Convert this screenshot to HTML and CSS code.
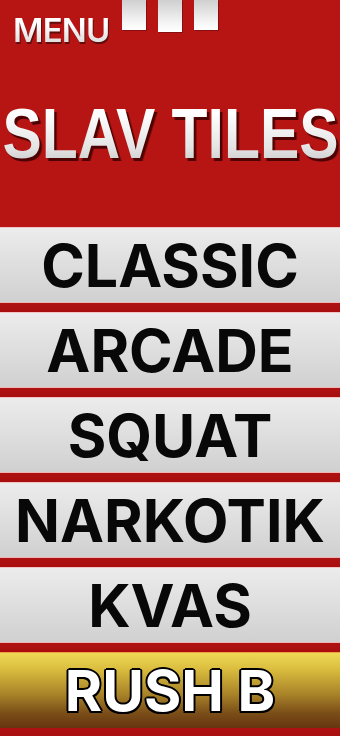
FILE: index.html
```html
<!DOCTYPE html>
<html>
<head>
<meta charset="utf-8">
<link rel="stylesheet" href="styles.css">
</head>
<body>
<div class="screen">
  <header class="header">
    <div class="menu-row">
      <span class="menu-label">MENU</span>
      <div class="bars">
        <span class="bar"></span>
        <span class="bar bar-long"></span>
        <span class="bar"></span>
      </div>
    </div>
    <div class="title-wrap">
      <h1 class="title">SLAV TILES</h1>
    </div>
  </header>
  <nav class="modes">
    <div class="mode">CLASSIC</div>
    <div class="mode">ARCADE</div>
    <div class="mode">SQUAT</div>
    <div class="mode">NARKOTIK</div>
    <div class="mode">KVAS</div>
    <div class="mode mode-gold">RUSH B</div>
  </nav>
</div>
</body>
</html>
```

FILE: styles.css
```css
html, body {
  margin: 0;
  padding: 0;
  background: #b81313;
}
.screen {
  width: 340px;
  height: 736px;
  overflow: hidden;
  background: #b81313;
  display: flex;
  flex-direction: column;
}
.header {
  height: 227px;
  display: flex;
  flex-direction: column;
  background: #b71414;
}
.menu-row {
  display: flex;
  align-items: flex-start;
  height: 45px;
}
.menu-label {
  width: 96px;
  margin: 14px 0 0 13px;
  font-family: "Inter", sans-serif;
  font-weight: 600;
  font-size: 33px;
  line-height: 1;
  letter-spacing: -0.8px;
  white-space: nowrap;
  background: linear-gradient(#ffffff 30%, #d6d6d6 100%);
  -webkit-background-clip: text;
  background-clip: text;
  color: transparent;
  filter: drop-shadow(1px 2px 0 rgba(70, 10, 10, 0.75));
}
.bars {
  display: flex;
  gap: 12px;
  margin-left: 13px;
  filter: drop-shadow(1px 1px 0 rgba(90, 10, 10, 0.5));
}
.bar {
  width: 24px;
  height: 30px;
  background: linear-gradient(#cfcfcf, #f4f4f4 70%, #ffffff);
}
.bar-long {
  height: 32px;
}
.title-wrap {
  display: flex;
  justify-content: center;
  margin-top: 53px;
}
.title {
  flex: none;
  margin: 0;
  padding: 0 4px;
  font-family: "Liberation Sans", Arial, sans-serif;
  font-weight: 700;
  font-size: 71px;
  line-height: 1;
  white-space: nowrap;
  transform: scaleX(0.83);
  background: linear-gradient(#ffffff 20%, #e4e4e4 70%, #c4c4c4 100%);
  -webkit-background-clip: text;
  background-clip: text;
  color: transparent;
  filter: drop-shadow(3px 3px 0 rgba(60, 0, 0, 0.85));
}
.modes {
  display: flex;
  flex-direction: column;
  gap: 9px;
  background: linear-gradient(#a90f0f, #c41a1a 50%, #a90f0f);
  background-size: 100% 85px;
  background-color: #b81313;
  flex: 1;
}
.mode {
  height: 76px;
  box-sizing: border-box;
  display: flex;
  align-items: center;
  justify-content: center;
  background: linear-gradient(#ececec, #dedede 50%, #d0d0d0);
  border-top: 1px solid #f3c4c4;
  border-bottom: 1px solid #efb4b4;
  font-family: "Inter", sans-serif;
  font-weight: 700;
  font-size: 59px;
  line-height: 1;
  color: #080808;
}
.mode-gold {
  background: linear-gradient(#efda55 0%, #d9bc3e 22%, #a98328 55%, #7a4e18 80%, #663510 100%);
  border-top: 1px solid #f0a040;
  border-bottom: none;
  color: #ffffff;
  font-size: 57px;
  text-shadow:
    2px 0 0 #000, -2px 0 0 #000, 0 2px 0 #000, 0 -2px 0 #000,
    1.5px 1.5px 0 #000, -1.5px 1.5px 0 #000, 1.5px -1.5px 0 #000, -1.5px -1.5px 0 #000;
}
```
